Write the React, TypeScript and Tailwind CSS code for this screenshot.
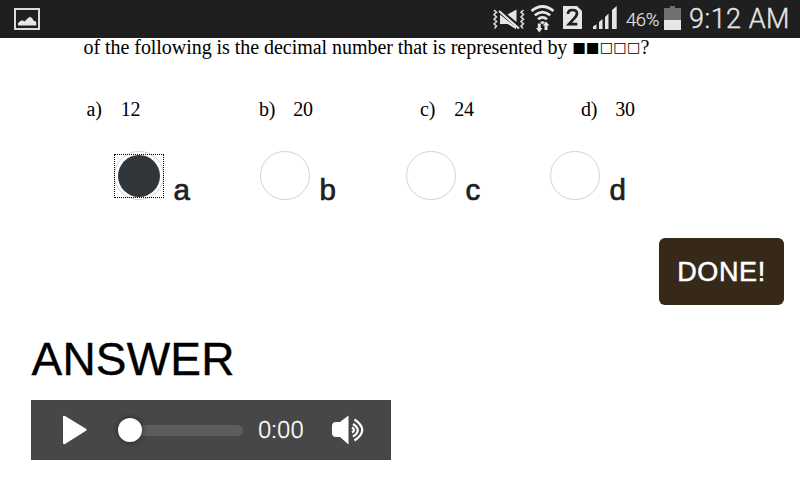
import React from "react";

function StatusBar() {
  return (
    <header className="flex h-[38px] items-start bg-[#1f1f1f] font-[Roboto,sans-serif] text-[#e6e6e6]">
      <svg className="mt-2 ml-3.5 h-[22px] w-[26px]" viewBox="0 0 26 22" fill="none">
        <rect x="1" y="1" width="24" height="20" stroke="#dcdcdc" strokeWidth="2" />
        <path d="M4 17.500V15l3-2.500h2l1.500 1L14 10l2-1.200L18 10l2 3h1.500l.8 2v2.500Z" fill="#e6e6e6" />
      </svg>
      <svg className="ml-[453px] h-[38px] w-[125px] shrink-0" viewBox="493 0 125 38" fill="none">
        <path d="M494 10l2.500 2.300-2.500 2.300 2.500 2.300-2.500 2.300 2.500 2.300-2.500 2.300 2.500 2.300-2 2.300M523.500 10l-2.500 2.300 2.500 2.300-2.500 2.300 2.500 2.300-2.500 2.300 2.500 2.300-2.500 2.300 2 2.300" stroke="#d4d4d4" strokeWidth="1.600" />
        <path d="M500 14.500l16 13v1.500l-8-5h-8Z" fill="#e6e6e6" />
        <path d="M507.500 14.500L516.500 9.500v12.500Z" fill="#e6e6e6" />
        <path d="M499 10.500L519 28" stroke="#1f1f1f" strokeWidth="4" />
        <path d="M499 11L519 28.500" stroke="#e6e6e6" strokeWidth="2.200" />
        <path d="M500 15v9h8l8 5v-2Z" fill="#e6e6e6" />
        <path d="M531.500 11q11-9 22 0M534.800 15.300q7.700-6.500 15.400 0M538 19.300q4.500-4 9 0" stroke="#e6e6e6" strokeWidth="2.700" />
        <path d="M540 22.300q2.500-2 5 0l-2.500 2.200Z" fill="#e6e6e6" />
        <path d="M537.800 23.500h3v4.500h1.700l-3.200 4.500-3.300-4.500h1.800ZM544.500 30v-4.500h-1.700l3.200-4 3.500 4h-2V30Z" fill="#e6e6e6" />
        <path d="M563 6h14l5 5v18h-19Z" fill="#e6e6e6" />
        <path d="M568 14q0-4 4.500-4t4.500 3.500q0 2-3 5.200l-5 5.500h8.300" stroke="#1f1f1f" strokeWidth="2.700" />
        <path d="M593 29v-2.500l3.500-2.200V29ZM599 29v-7l3.500-3v10ZM605 29V17l3.500-3.500V29ZM612 29V10l4.700-4v23Z" fill="#e6e6e6" />
      </svg>
      <span className="mt-[9px] ml-2 w-[38px] text-[18.500px] leading-[22px] font-light tracking-[-0.4px] whitespace-nowrap text-[#dcdcdc] [-webkit-text-stroke:0.25px_#dcdcdc]">46%</span>
      <span className="mt-1.5 flex h-6 w-[17px] flex-col items-center">
        <span className="h-0.5 w-[5px] bg-[#707070]" />
        <span className="h-3 w-full bg-[#707070]" />
        <span className="h-2.5 w-full bg-[#e6e6e6]" />
      </span>
      <span className="mt-1 ml-2 text-[27px] leading-[30px] font-light tracking-[0.5px] whitespace-nowrap [-webkit-text-stroke:0.35px_#e6e6e6]">9:12 AM</span>
    </header>
  );
}

const options = [
  { letter: "a", value: "12", cell: "w-[172.500px]", gap: "gap-[19px]", radio: "w-[146px]" },
  { letter: "b", value: "20", cell: "w-[161px]", gap: "gap-[18px]", radio: "w-[146px]" },
  { letter: "c", value: "24", cell: "w-[161px]", gap: "gap-[19px]", radio: "w-[144px]" },
  { letter: "d", value: "30", cell: "w-[90px]", gap: "gap-[18px]", radio: "w-[90px]" },
];

function AudioPlayer() {
  return (
    <div className="ml-[31px] flex h-[60px] w-[360px] items-center bg-[#474747] text-white">
      <svg className="ml-8 h-[30px] w-6" viewBox="0 0 24 30" fill="white">
        <path d="M0 2q0-2 2-1l21 12.800q1.200 1 0 2L2 29q-2 .8-2-1.200Z" />
      </svg>
      <div className="ml-[31px] flex h-[11px] w-[125px] items-center rounded-full bg-[#5c5c5c]">
        <span className="h-6 w-6 rounded-full bg-white shadow-[0_0_5px_1px_rgba(0,0,0,0.35)]" />
      </div>
      <span className="ml-[15px] w-[47px] font-[Roboto,sans-serif] text-[24px] leading-[28px] font-light tracking-[0.3px] [-webkit-text-stroke:0.35px_white]">0:00</span>
      <svg className="ml-[27px] h-[30px] w-[33px]" viewBox="0 0 33 30" fill="none">
        <path d="M0 11q0-4 4-4h4L16.500.5v29L8 22H4q-4 0-4-4Z" fill="white" />
        <path d="M20 12.500q4 2.500 0 5M21 9q9.500 6 0 12.500M22.500 4.500q15.500 10.500 0 21" stroke="white" strokeWidth="2.200" />
      </svg>
    </div>
  );
}

export default function App() {
  return (
    <div className="h-[480px] w-[800px] overflow-hidden bg-white text-black">
      <StatusBar />
      <main>
        <p className="flex h-[21px] items-start pl-[83.500px] font-['Liberation_Serif',serif] text-[20px] leading-[18px] whitespace-nowrap">
          <span className="w-[489px] tracking-[-0.045px]">of the following is the decimal number that is represented by</span>
          <span className="w-[68px] font-['DejaVu_Sans',sans-serif] text-[14.400px]">■■□□□</span>
          <span>?</span>
        </p>
        <div className="mt-[39px] flex h-6 pl-[86.500px] font-['Liberation_Serif',serif] text-[20px] leading-[22px] tracking-[-0.2px]">
          {options.map((o) => (
            <div key={o.letter} className={`flex shrink-0 ${o.cell} ${o.gap}`}>
              <span>{o.letter})</span>
              <span>{o.value}</span>
            </div>
          ))}
        </div>
        <div className="mt-[29px] flex h-[58px] pl-[114px]">
          {options.map((o) => (
            <label key={o.letter} className={`flex shrink-0 ${o.radio}`}>
              <span className="relative flex h-[49px] w-[50px] items-center justify-center rounded-full border border-[#d2d2d2]">
                {o.letter === "a" && (
                  <>
                    <span className="h-[42px] w-[42px] rounded-full bg-[#30363a]" />
                    <span className="absolute top-[2px] -left-px h-11 w-[50px] border border-dotted border-black" />
                  </>
                )}
              </span>
              <span className="mt-[21px] ml-[9.500px] font-['Liberation_Sans',sans-serif] text-[29.500px] leading-[36px] text-[#202020] [-webkit-text-stroke:0.7px_#202020]">
                {o.letter}
              </span>
            </label>
          ))}
        </div>
        <div className="mt-[29px] flex justify-end pr-4">
          <button className="h-[67px] w-[125px] rounded-[6px] bg-[#372919] pt-px font-['Liberation_Sans',sans-serif] text-[27px] leading-[32px] tracking-[0.6px] text-white [-webkit-text-stroke:0.5px_white]">
            DONE!
          </button>
        </div>
        <h1 className="mt-[27px] h-[68px] pl-[31.500px] font-['Liberation_Sans',sans-serif] text-[46px] leading-[54px] tracking-[0.2px] [-webkit-text-stroke:0.4px_black]">ANSWER</h1>
        <AudioPlayer />
      </main>
    </div>
  );
}
